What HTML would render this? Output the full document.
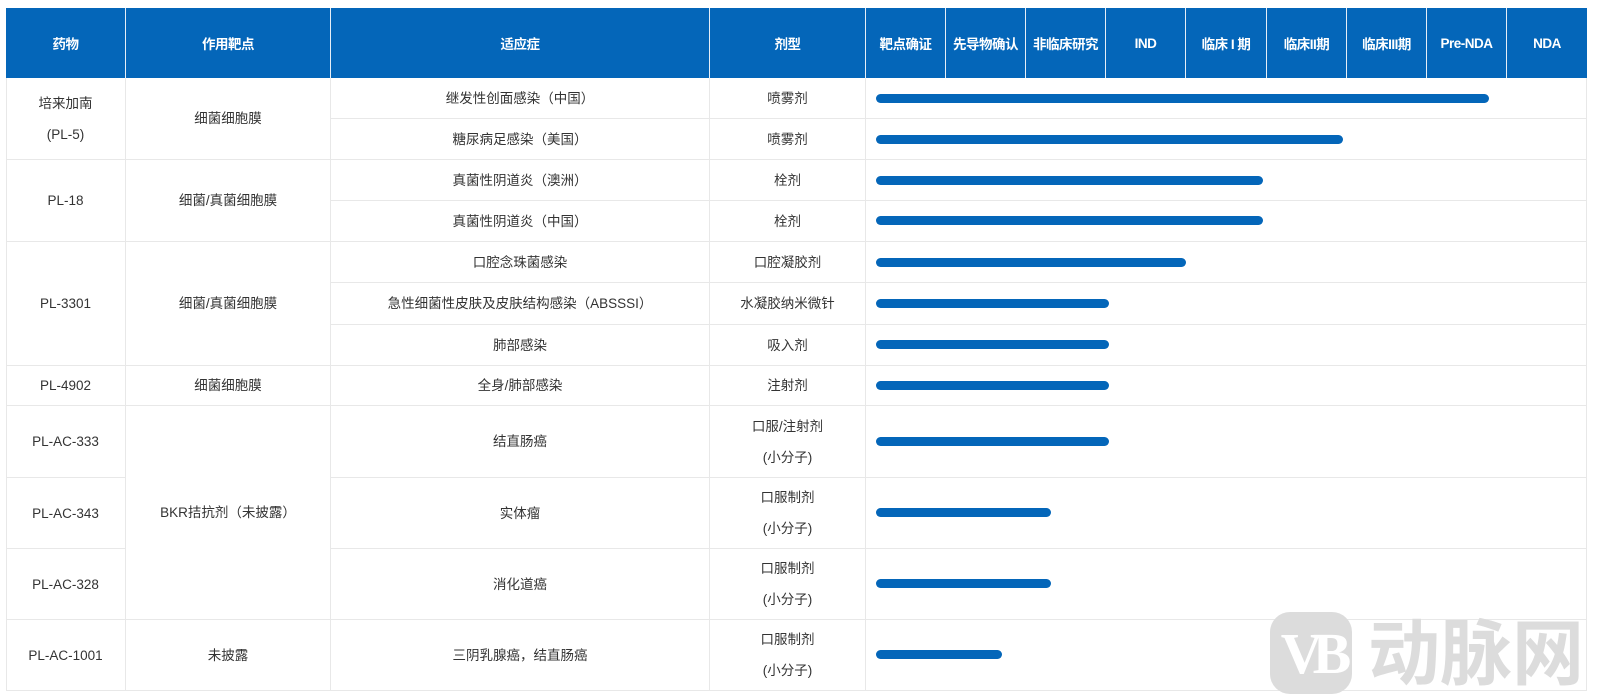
<!DOCTYPE html>
<html><head><meta charset="utf-8"><style>
*{margin:0;padding:0;box-sizing:border-box}
body{width:1599px;height:700px;background:#fff;position:relative;overflow:hidden;font-family:"Liberation Sans","Noto Sans CJK SC",sans-serif;color:#333;font-size:13.5px}
.h{position:absolute;top:8px;height:70px;background:#0466b9;color:#fff;font-weight:bold;display:flex;align-items:center;justify-content:center;font-size:13.5px;border-right:1px solid #e6eef7;white-space:nowrap;letter-spacing:-0.5px}
.c{position:absolute;display:flex;align-items:center;justify-content:center;text-align:center;border-right:1px solid #e8e8e8;border-bottom:1px solid #e8e8e8;line-height:31px}
.b{position:absolute;left:876px;height:9px;border-radius:5px;background:#0466b9}
.wm{position:absolute;color:#dcdcdc;font-size:72px;line-height:90px;white-space:nowrap;font-family:"Noto Sans CJK SC",sans-serif;font-weight:bold}
</style></head><body>
<div class="h" style="left:6px;width:120px">药物</div>
<div class="h" style="left:126px;width:205px">作用靶点</div>
<div class="h" style="left:331px;width:379px">适应症</div>
<div class="h" style="left:710px;width:156px">剂型</div>
<div class="h" style="left:866px;width:80px">靶点确证</div>
<div class="h" style="left:946px;width:80px">先导物确认</div>
<div class="h" style="left:1026px;width:80px">非临床研究</div>
<div class="h" style="left:1106px;width:80px">IND</div>
<div class="h" style="left:1186px;width:81px">临床 I 期</div>
<div class="h" style="left:1267px;width:80px">临床II期</div>
<div class="h" style="left:1347px;width:80px">临床III期</div>
<div class="h" style="left:1427px;width:80px">Pre-NDA</div>
<div class="h" style="left:1507px;width:80px;border-right:none">NDA</div>

<div style="position:absolute;left:6px;top:78px;width:1px;height:613px;background:#e8e8e8"></div>
<div class="c" style="left:6px;top:78px;width:120px;height:82px">培来加南<br>(PL-5)</div>
<div class="c" style="left:6px;top:160px;width:120px;height:82px">PL-18</div>
<div class="c" style="left:6px;top:242px;width:120px;height:124px">PL-3301</div>
<div class="c" style="left:6px;top:366px;width:120px;height:40px">PL-4902</div>
<div class="c" style="left:6px;top:406px;width:120px;height:72px">PL-AC-333</div>
<div class="c" style="left:6px;top:478px;width:120px;height:71px">PL-AC-343</div>
<div class="c" style="left:6px;top:549px;width:120px;height:71px">PL-AC-328</div>
<div class="c" style="left:6px;top:620px;width:120px;height:71px">PL-AC-1001</div>

<div class="c" style="left:126px;top:78px;width:205px;height:82px">细菌细胞膜</div>
<div class="c" style="left:126px;top:160px;width:205px;height:82px">细菌/真菌细胞膜</div>
<div class="c" style="left:126px;top:242px;width:205px;height:124px">细菌/真菌细胞膜</div>
<div class="c" style="left:126px;top:366px;width:205px;height:40px">细菌细胞膜</div>
<div class="c" style="left:126px;top:406px;width:205px;height:214px">BKR拮抗剂（未披露）</div>
<div class="c" style="left:126px;top:620px;width:205px;height:71px">未披露</div>

<div class="c" style="left:331px;top:78px;width:379px;height:41px">继发性创面感染（中国）</div>
<div class="c" style="left:331px;top:119px;width:379px;height:41px">糖尿病足感染（美国）</div>
<div class="c" style="left:331px;top:160px;width:379px;height:41px">真菌性阴道炎（澳洲）</div>
<div class="c" style="left:331px;top:201px;width:379px;height:41px">真菌性阴道炎（中国）</div>
<div class="c" style="left:331px;top:242px;width:379px;height:41px">口腔念珠菌感染</div>
<div class="c" style="left:331px;top:283px;width:379px;height:42px">急性细菌性皮肤及皮肤结构感染（ABSSSI）</div>
<div class="c" style="left:331px;top:325px;width:379px;height:41px">肺部感染</div>
<div class="c" style="left:331px;top:366px;width:379px;height:40px">全身/肺部感染</div>
<div class="c" style="left:331px;top:406px;width:379px;height:72px">结直肠癌</div>
<div class="c" style="left:331px;top:478px;width:379px;height:71px">实体瘤</div>
<div class="c" style="left:331px;top:549px;width:379px;height:71px">消化道癌</div>
<div class="c" style="left:331px;top:620px;width:379px;height:71px">三阴乳腺癌，结直肠癌</div>

<div class="c" style="left:710px;top:78px;width:156px;height:41px">喷雾剂</div>
<div class="c" style="left:710px;top:119px;width:156px;height:41px">喷雾剂</div>
<div class="c" style="left:710px;top:160px;width:156px;height:41px">栓剂</div>
<div class="c" style="left:710px;top:201px;width:156px;height:41px">栓剂</div>
<div class="c" style="left:710px;top:242px;width:156px;height:41px">口腔凝胶剂</div>
<div class="c" style="left:710px;top:283px;width:156px;height:42px">水凝胶纳米微针</div>
<div class="c" style="left:710px;top:325px;width:156px;height:41px">吸入剂</div>
<div class="c" style="left:710px;top:366px;width:156px;height:40px">注射剂</div>
<div class="c" style="left:710px;top:406px;width:156px;height:72px">口服/注射剂<br>(小分子)</div>
<div class="c" style="left:710px;top:478px;width:156px;height:71px">口服制剂<br>(小分子)</div>
<div class="c" style="left:710px;top:549px;width:156px;height:71px">口服制剂<br>(小分子)</div>
<div class="c" style="left:710px;top:620px;width:156px;height:71px">口服制剂<br>(小分子)</div>

<div class="c" style="left:866px;top:78px;width:721px;height:41px"></div>
<div class="c" style="left:866px;top:119px;width:721px;height:41px"></div>
<div class="c" style="left:866px;top:160px;width:721px;height:41px"></div>
<div class="c" style="left:866px;top:201px;width:721px;height:41px"></div>
<div class="c" style="left:866px;top:242px;width:721px;height:41px"></div>
<div class="c" style="left:866px;top:283px;width:721px;height:42px"></div>
<div class="c" style="left:866px;top:325px;width:721px;height:41px"></div>
<div class="c" style="left:866px;top:366px;width:721px;height:40px"></div>
<div class="c" style="left:866px;top:406px;width:721px;height:72px"></div>
<div class="c" style="left:866px;top:478px;width:721px;height:71px"></div>
<div class="c" style="left:866px;top:549px;width:721px;height:71px"></div>
<div class="c" style="left:866px;top:620px;width:721px;height:71px"></div>

<div class="b" style="top:94px;width:613px"></div>
<div class="b" style="top:135px;width:467px"></div>
<div class="b" style="top:176px;width:387px"></div>
<div class="b" style="top:216px;width:387px"></div>
<div class="b" style="top:258px;width:310px"></div>
<div class="b" style="top:299px;width:233px"></div>
<div class="b" style="top:340px;width:233px"></div>
<div class="b" style="top:381px;width:233px"></div>
<div class="b" style="top:437px;width:233px"></div>
<div class="b" style="top:508px;width:175px"></div>
<div class="b" style="top:579px;width:175px"></div>
<div class="b" style="top:650px;width:126px"></div>

<div style="position:absolute;left:1270px;top:612px;width:82px;height:82px;border-radius:20px;background:#dcdcdc;color:#fff;font-family:'Liberation Serif',serif;font-weight:bold;font-size:58px;display:flex;align-items:center;justify-content:center;letter-spacing:-10px">VB</div>
<div class="wm" style="left:1368px;top:603px">动脉网</div>
</body></html>
